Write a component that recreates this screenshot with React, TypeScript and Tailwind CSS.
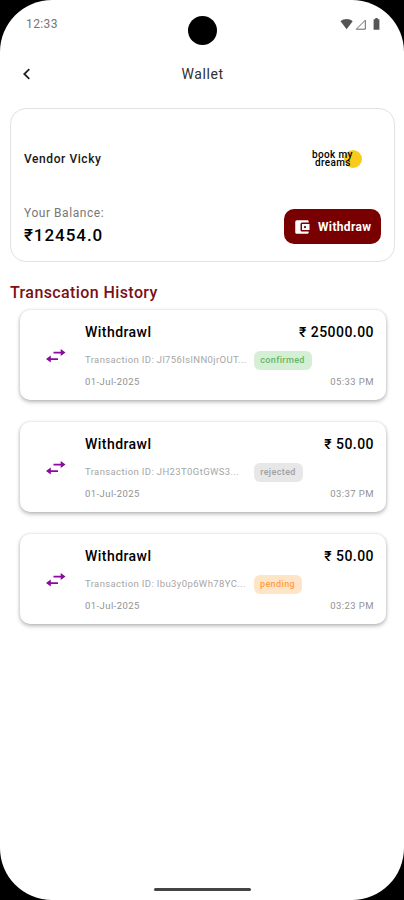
import { MdAccountBalanceWallet } from "react-icons/md";

interface Transaction {
  id: string;
  amount: string;
  status: "confirmed" | "rejected" | "pending";
  date: string;
  time: string;
}

const transactions: Transaction[] = [
  { id: "Jl756IslNN0jrOUT...", amount: "25000.00", status: "confirmed", date: "01-Jul-2025", time: "05:33 PM" },
  { id: "JH23T0GtGWS3...", amount: "50.00", status: "rejected", date: "01-Jul-2025", time: "03:37 PM" },
  { id: "Ibu3y0p6Wh78YC...", amount: "50.00", status: "pending", date: "01-Jul-2025", time: "03:23 PM" },
];

const statusStyles = {
  confirmed: "w-[58px] bg-[#d5efd6] text-[#62b566]",
  rejected: "w-[49px] bg-[#e7e7e7] text-[#a0a0a0]",
  pending: "w-[48px] bg-[#ffe5c7] text-[#ff9d45]",
};

const StatusBar = () => (
  <div className="relative flex h-12 items-center justify-between pl-[26px] pr-[23px]">
    <span className="text-[12px] tracking-[0.4px] text-[#757575]">12:33</span>
    {/* Camera cutout */}
    <div className="absolute left-[188px] top-4 size-[29px] rounded-full bg-black" />
    <svg className="h-3 w-[41px]" viewBox="0 0 41 12" fill="#555">
      <path d="M0.5 3.2C4 .2 9.2.2 12.7 3.2L6.6 11.2Z" />
      <path d="M25.3 2.2V11.2H16.3Z" fill="none" stroke="#666" />
      <path d="M33.6 1.2h1.7V0h2.4v1.2h1.7v10.6h-5.8z" />
    </svg>
  </div>
);

const BrandLogo = () => (
  <div className="relative mr-[19px] h-5 w-[50px]">
    <div className="absolute right-0 top-px size-[18px] rounded-full bg-[#fbcb1c]" />
    <div className="relative pt-[2px] text-[10px] font-medium leading-[8px] tracking-[0.35px] text-black">
      <p>book my</p>
      <p className="pl-[3px]">dreams</p>
    </div>
  </div>
);

const TransactionCard = ({ transaction }: { transaction: Transaction }) => (
  <div className="flex h-[90px] rounded-[10px] bg-white pr-3 shadow-[0_2px_4px_rgba(0,0,0,0.27),0_0_3px_rgba(0,0,0,0.12)]">
    <div className="w-[65px] shrink-0 pl-[26px] pt-[39px]">
      <svg className="h-[14px] w-5" viewBox="0 0 20 14" fill="#8b0a9e">
        <path d="M7.5 2.7h7.2V0L19.5 3.5 14.7 7V4.4H7.5z" />
        <path d="M12 9.2H4.8V6.5L0 10l4.8 3.5v-2.6H12z" />
      </svg>
    </div>
    <div className="min-w-0 flex-1">
      <div className="flex h-11 items-center justify-between text-[14px] font-medium tracking-[0.45px] text-black">
        <span>Withdrawl</span>
        <span>₹ {transaction.amount}</span>
      </div>
      <div className="flex h-[13px] items-center text-[9.5px] tracking-[0.38px] text-[#a6a6a6]">
        <span className="w-[168.5px] whitespace-nowrap">Transaction ID: {transaction.id}</span>
        <span
          className={`flex h-[19px] items-center justify-center rounded-md text-[9px] font-medium ${statusStyles[transaction.status]}`}
        >
          {transaction.status}
        </span>
      </div>
      <div className="flex h-[30px] items-center justify-between text-[9.5px] tracking-[0.42px] text-[#929292]">
        <span>{transaction.date}</span>
        <span>{transaction.time}</span>
      </div>
    </div>
  </div>
);

const App = () => {
  return (
    <div className="h-[900px] w-[404px] overflow-hidden bg-black font-['Roboto',sans-serif]">
      <div className="flex h-full flex-col rounded-[52px] bg-white">
        <StatusBar />

        <header className="relative flex h-[52px] items-center justify-center">
          <svg className="absolute left-[23px] top-5 h-3 w-2" viewBox="0 0 8 12" fill="none" stroke="#222" strokeWidth="1.8">
            <path d="M6.3 1.2L1.3 6l5 4.8" />
          </svg>
          <h1 className="pl-px text-[14px] tracking-[0.6px] text-[#303030]">Wallet</h1>
        </header>

        {/* Balance card */}
        <section className="ml-[10px] mr-[9px] mt-2 h-[154px] rounded-2xl border border-[#e2e2e2] px-[13px] pt-10">
          <div className="flex h-5 items-center justify-between">
            <span className="text-[12px] font-medium tracking-[0.57px] text-[#181818]">Vendor Vicky</span>
            <BrandLogo />
          </div>
          <div className="mt-[35px] flex justify-between">
            <div>
              <p className="text-[12px] leading-[18px] tracking-[0.55px] text-[#777]">Your Balance:</p>
              <p className="text-[17px] font-medium leading-[26px] tracking-[0.95px] text-black">₹12454.0</p>
            </div>
            <button className="mt-[5px] flex h-[35px] w-[97px] items-center rounded-[10px] bg-[#780000] pl-[9px] text-white">
              <MdAccountBalanceWallet className="size-[18px]" />
              <span className="ml-[7px] text-[12px] font-bold tracking-[0.35px]">Withdraw</span>
            </button>
          </div>
        </section>

        <h2 className="ml-[10px] mt-[21px] text-[16px] font-medium leading-5 tracking-[0.4px] text-[#7b1015]">
          Transcation History
        </h2>

        <div className="ml-5 mr-[18px] mt-[7px] flex flex-col gap-[22px]">
          {transactions.map((transaction) => (
            <TransactionCard key={transaction.id} transaction={transaction} />
          ))}
        </div>

        {/* Gesture bar */}
        <div className="mx-auto mb-[9px] mt-auto h-[3px] w-[97px] rounded-full bg-[#444]" />
      </div>
    </div>
  );
};

export default App;
